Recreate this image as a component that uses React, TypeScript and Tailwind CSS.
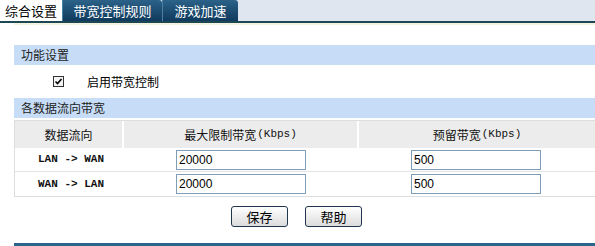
import React from 'react';

const cjk = { fontFamily: '"Noto Sans CJK SC", "Liberation Sans", sans-serif' };
const mono = { fontFamily: '"Liberation Mono", "Noto Sans CJK SC", monospace' };

const tabs = [
  { label: '综合设置', active: true, w: 'w-[62px]' },
  { label: '带宽控制规则', active: false, w: 'w-[100px]' },
  { label: '游戏加速', active: false, w: 'w-[76px]' },
];

const rows = [
  { dir: 'LAN -> WAN', max: '20000', reserve: '500' },
  { dir: 'WAN -> LAN', max: '20000', reserve: '500' },
];

const SectionHeader: React.FC<{ title: string }> = ({ title }) => (
  <div className="h-[20px] bg-[#c7ddf7] pl-[7px] flex items-center text-[12px] text-[#222]">{title}</div>
);

export default function App() {
  return (
    <div className="w-[595px] h-[246px] bg-white overflow-hidden text-[12px] text-black" style={cjk}>
      {/* Tabs */}
      <div className="h-[21px] bg-[#dfe6f0] flex items-stretch">
        {tabs.map((t) => (
          <div
            key={t.label}
            className={`${t.w} flex items-center justify-center text-[13px] ${
              t.active
                ? 'bg-white text-black'
                : 'bg-gradient-to-b from-[#2c6289] to-[#0f3a5d] text-white border-l border-[#4a7fa6] rounded-tr-[3px]'
            }`}
          >
            {t.label}
          </div>
        ))}
      </div>
      <div className="h-[2px] bg-[#1d4753]" />
      <div className="h-[2px] ml-[14px] bg-[#f3f3df]" />

      <div className="pl-[14px] pt-[20px]">
        <SectionHeader title="功能设置" />
        <div className="h-[33px] flex items-center pl-[39px]">
          <span className="w-[11px] h-[11px] border border-[#333] bg-[#f4f4f4] flex items-center justify-center">
            <svg width="9" height="9" viewBox="0 0 9 9">
              <path d="M1.5 4.5 L3.5 6.5 L7.5 2" stroke="#000" strokeWidth="1.6" fill="none" />
            </svg>
          </span>
          <span className="ml-[23px]">启用带宽控制</span>
        </div>
        <SectionHeader title="各数据流向带宽" />

        <div className="mt-[2px] border border-[#dedede] border-r-0">
          <div className="h-[27px] bg-[#ececec] grid grid-cols-[109px_235px_1fr] text-[#111]">
            <div className="flex items-center justify-center border-r-2 border-white">数据流向</div>
            <div className="flex items-center justify-center border-r-2 border-white">
              最大限制带宽<span style={mono} className="text-[11px] ml-[1px]">(Kbps)</span>
            </div>
            <div className="flex items-center justify-center">
              预留带宽<span style={mono} className="text-[11px] ml-[1px]">(Kbps)</span>
            </div>
          </div>
          {rows.map((r, i) => (
            <div
              key={r.dir}
              className={`h-[24px] grid grid-cols-[109px_235px_1fr] items-center ${i === 0 ? 'border-b border-[#e2e2e2]' : ''}`}
            >
              <div style={mono} className="pl-[23px] text-[11px] font-bold text-[#111]">{r.dir}</div>
              <div className="pl-[52px]">
                <div className="w-[130px] h-[20px] border border-[#7f9db9] flex items-center pl-[2px] text-[12px]" style={{ fontFamily: '"Liberation Sans", sans-serif' }}>
                  {r.max}
                </div>
              </div>
              <div className="pl-[52px]">
                <div className="w-[130px] h-[20px] border border-[#7f9db9] flex items-center pl-[2px] text-[12px]" style={{ fontFamily: '"Liberation Sans", sans-serif' }}>
                  {r.reserve}
                </div>
              </div>
            </div>
          ))}
        </div>

        <div className="flex justify-center gap-[17px] pt-[9px] pr-[16px]">
          {['保存', '帮助'].map((b) => (
            <button
              key={b}
              className="w-[57px] h-[21px] rounded-[3px] border border-[#1f3550] bg-gradient-to-b from-white to-[#dcdcdc] text-[13px] text-black flex items-center justify-center"
            >
              {b}
            </button>
          ))}
        </div>

        <div className="mt-[16px] h-[4px] bg-[#2a6689]" />
      </div>
    </div>
  );
}
